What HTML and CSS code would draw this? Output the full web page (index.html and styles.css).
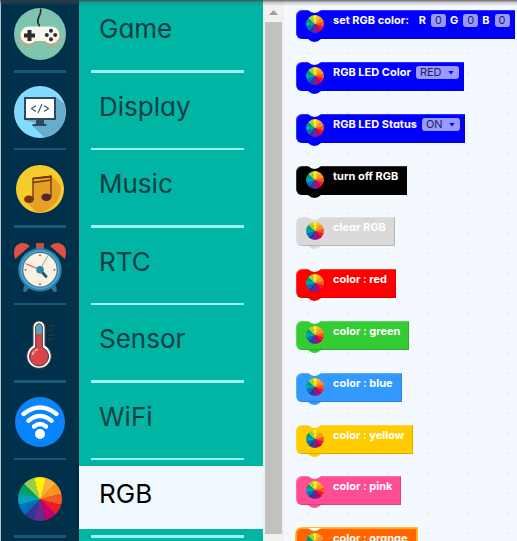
FILE: index.html
```html
<!DOCTYPE html>
<html lang="en">
<head>
<meta charset="utf-8">
<title>Blocks</title>
<link rel="stylesheet" href="styles.css">
</head>
<body>
<nav class="toolbox" aria-label="Categories">
  <ul class="categories">
    <li class="category">
      <span class="category-icon"><svg class="icon" viewBox="0 0 52 52" aria-hidden="true">
        <circle cx="26" cy="26" r="26" fill="#7dc5ae"/>
        <path d="M26.500 0.500C28 7 22 11 24 15Q25.500 17 25.500 20" fill="none" stroke="#25292c" stroke-width="1.600"/>
        <path d="M15.500 20.500H36.500A9 9 0 1 1 33 37Q30 35 29 34H23Q21 36 19 37A9 9 0 1 1 15.500 20.500Z" fill="#b9ab8b"/>
        <path d="M15.500 18.500H36.500A8.500 8.500 0 1 1 31 33H21A8.500 8.500 0 1 1 15.500 18.500Z" fill="#f7f5ee"/>
        <path d="M13.500 22h4v3.500H21v4h-3.500V33h-4v-3.500H10v-4h3.500Z" fill="#2b2b2b"/>
        <g fill="#2b2b2b"><circle cx="37" cy="22.800" r="2"/><circle cx="37" cy="31.200" r="2"/><circle cx="32.800" cy="27" r="2"/><circle cx="41.200" cy="27" r="2"/></g>
      </svg></span>
      <button class="category-name">Game</button>
    </li>
    <li class="category">
      <span class="category-icon"><svg class="icon" viewBox="0 0 52 52" aria-hidden="true">
        <circle cx="26" cy="26" r="26" fill="#84dbff"/>
        <path d="M42 11L50.500 18A26 26 0 0 1 30.500 51.600L18.600 40L22 37L11 34Z" fill="#67accb"/>
        <rect x="10" y="11" width="32" height="23" fill="#324a5e"/>
        <rect x="12" y="13" width="28" height="19" fill="#fff"/>
        <path d="M22 34h8v4h2.500v2h-14v-2H22Z" fill="#324a5e"/>
        <path d="M22 19.500L17.500 22.500L22 25.500M30 19.500L34.500 22.500L30 25.500M28 18L24 27" fill="none" stroke="#3d5265" stroke-width="1.100"/>
      </svg></span>
      <button class="category-name">Display</button>
    </li>
    <li class="category">
      <span class="category-icon"><svg class="icon" viewBox="0 0 52 52" aria-hidden="true">
        <circle cx="26" cy="26" r="24" fill="#f5cb2e"/>
        <path d="M37 12.700L46.500 22A24 24 0 0 1 23 49.500L12 39L19 33V18Z" fill="#e5a125"/>
        <path d="M19 36V15.500L37 13.200V34M19 19.500L37 17.200" fill="none" stroke="#703112" stroke-width="1.300"/>
        <path d="M18.500 14.700L37.500 12.500V14.500L18.500 16.500Z" fill="#703112"/>
        <ellipse cx="15" cy="36.300" rx="4.900" ry="3.800" fill="#78350f"/>
        <ellipse cx="32.300" cy="34.300" rx="4.900" ry="3.800" fill="#562337"/>
      </svg></span>
      <button class="category-name">Music</button>
    </li>
    <li class="category">
      <span class="category-icon"><svg class="icon" viewBox="0 0 52 52" aria-hidden="true">
        <path d="M10 44l-1 6q3 3 6-3ZM42 44l1 6q-3 3-6-3Z" fill="#2a7598"/>
        <path d="M1 18Q-2 7 4 3.500Q10 0 16 5ZM51 18Q54 7 48 3.500Q42 0 36 5Z" fill="#df5142"/>
        <rect x="22" y="2" width="8" height="6" rx="1" fill="#c84e43"/>
        <circle cx="26" cy="28.700" r="21.700" fill="#2e83ad"/>
        <circle cx="26" cy="28.700" r="19.500" fill="#5aa9cd"/>
        <circle cx="26" cy="28.700" r="18" fill="#2d7ea6"/>
        <circle cx="26" cy="28.700" r="16.700" fill="#f9f2e4"/>
        <g fill="#d84b40"><circle cx="26" cy="14.300" r="1"/><circle cx="26" cy="43.200" r="1"/><circle cx="11.600" cy="28.700" r="1"/><circle cx="40.400" cy="28.700" r="1"/></g>
        <path d="M26 28.700L33.700 15" stroke="#a8aeb3" stroke-width="1.200"/>
        <path d="M26 28.700L12 22.700" stroke="#d2574b" stroke-width="1.100"/>
        <path d="M26 28.700L32 35.500" stroke="#235e66" stroke-width="3" stroke-linecap="round"/>
        <circle cx="26" cy="28.700" r="3.800" fill="#2585ab"/>
      </svg></span>
      <button class="category-name">RTC</button>
    </li>
    <li class="category">
      <span class="category-icon"><svg class="icon" viewBox="0 0 52 52" aria-hidden="true">
        <path d="M19 9a6 6 0 0 1 12 0V27.500A12.200 12.200 0 1 1 19 27.500Z" fill="#fff" stroke="#513f40" stroke-width="1"/>
        <path d="M21.700 9a3.300 3.300 0 0 1 6.600 0V29.500A9.500 9.500 0 1 1 21.700 29.500Z" fill="#dd4448" stroke="#35414c" stroke-width="1"/>
        <path d="M22.200 16V9a2.800 2.800 0 0 1 5.600 0V16Z" fill="#55a6bd"/>
        <path d="M18.500 37Q19 32.500 24 31.500" fill="none" stroke="#f6b5b2" stroke-width="1.500" stroke-dasharray="4 1"/>
        <path d="M34.500 8H41M34.500 12.500H38.500M34.500 17H41M34.500 21.500H38.500" stroke="#293a45" stroke-width="1.400"/>
      </svg></span>
      <button class="category-name">Sensor</button>
    </li>
    <li class="category">
      <span class="category-icon"><svg class="icon" viewBox="0 0 52 52" aria-hidden="true">
        <circle cx="26" cy="26" r="25" fill="#0a84fb"/>
        <g fill="none" stroke="#fff" stroke-width="4.400" stroke-linecap="round"><path d="M9.500 18Q26 5 42.500 18"/><path d="M14.500 24.700Q26 15.500 37.500 24.700"/><path d="M20 30.500Q26 25.500 32 30.500"/></g>
        <circle cx="26" cy="38" r="5" fill="#fff"/>
      </svg></span>
      <button class="category-name">WiFi</button>
    </li>
    <li class="category">
      <span class="category-icon"><span class="wheel wheel-large"></span></span>
      <button class="category-name is-selected">RGB</button>
    </li>
  </ul>
</nav>
<div class="scrollbar" aria-hidden="true"><span class="scroll-arrow"></span><span class="scroll-thumb"></span></div>
<main class="workspace">
  <div class="block blue-deep"><span class="wheel"></span>
    <div class="fields rgb-fields"><span class="lead">set RGB color:</span>
      <label class="pair">R <input class="field number" value="0"></label>
      <label class="pair">G <input class="field number" value="0"></label>
      <label class="pair">B <input class="field number" value="0"></label></div></div>
  <div class="block blue-deep"><span class="wheel"></span>
    <label class="fields pair">RGB LED Color <span class="picker"><select class="field choice"><option>RED</option></select></span></label></div>
  <div class="block blue-deep"><span class="wheel"></span>
    <label class="fields pair">RGB LED Status <span class="picker"><select class="field choice"><option>ON</option></select></span></label></div>
  <div class="block black"><span class="wheel"></span><span class="fields">turn off RGB</span></div>
  <div class="block grey"><span class="wheel"></span><span class="fields">clear RGB</span></div>
  <div class="block red"><span class="wheel"></span><span class="fields">color : red</span></div>
  <div class="block green"><span class="wheel"></span><span class="fields">color : green</span></div>
  <div class="block blue"><span class="wheel"></span><span class="fields">color : blue</span></div>
  <div class="block yellow"><span class="wheel"></span><span class="fields">color : yellow</span></div>
  <div class="block pink"><span class="wheel"></span><span class="fields">color : pink</span></div>
  <div class="block orange is-active"><span class="wheel"></span><span class="fields">color : orange</span></div>
</main>
</body>
</html>
```
FILE: styles.css
```css
* { box-sizing: border-box; }

body {
  margin: 0;
  height: 100vh;
  display: flex;
  overflow: hidden;
  font-family: Inter, "Liberation Sans", sans-serif;
  font-feature-settings: "cv11";
}

body::after {
  content: "";
  position: absolute;
  inset: 0 0 auto;
  height: 6px;
  background: linear-gradient(rgba(60, 60, 60, 0.75), rgba(90, 90, 90, 0.3) 40%, transparent);
  pointer-events: none;
}

.toolbox {
  flex: none;
  width: 263px;
  overflow: hidden;
  background: linear-gradient(to right, #b4c4cc 1px, #00304a 1px 76px, #002b44 76px 79px, #00b5a3 79px);
}

.categories {
  list-style: none;
  margin: -5px 0 0;
  padding: 0;
}

.category {
  display: grid;
  grid-template-columns: 79px 1fr;
  height: 78px;
  padding: 6px 0;
  background:
    linear-gradient(#1b5878, #1b5878) 14px 100% / 52px 3px no-repeat,
    linear-gradient(#9bf1f4, #9bf1f4) 91px 100% / 153px 3px no-repeat;
}

.category:nth-child(even) {
  height: 77px;
  background-size: 52px 2px, 153px 2px;
}

.category-icon {
  display: flex;
  align-items: center;
  justify-content: center;
  padding-left: 1px;
}

.icon { width: 52px; height: 52px; }

.category-name {
  margin: 0 0 3px;
  padding: 0 20px 8px;
  border: 0;
  background: none;
  color: #073e46;
  font: 400 26px Inter, "Liberation Sans", sans-serif;
  font-feature-settings: "cv11";
  text-align: left;
}

.category-name.is-selected { background: #f0f8ff; color: #000; }

.wheel {
  flex: none;
  width: 18px;
  height: 18px;
  border-radius: 50%;
  background: conic-gradient(from -15deg,
    #fff200 30deg, #fbb03b 0 60deg, #f7931e 0 90deg, #f15a24 0 120deg,
    #ed1c24 0 150deg, #c1006e 0 180deg, #662d91 0 210deg, #343795 0 240deg,
    #0071bc 0 270deg, #00a3b8 0 300deg, #00a067 0 330deg, #9fcc4a 0);
}

.wheel-large { width: 44px; height: 44px; }

.scrollbar {
  flex: none;
  width: 21px;
  display: flex;
  flex-direction: column;
  padding: 10px 2px 7px;
  background: #f1f1f1;
}

.scroll-arrow {
  margin: 0 4px 7px;
  height: 5px;
  background: #a0a0a0;
  clip-path: polygon(50% 0, 100% 100%, 0 100%);
}

.scroll-thumb { flex: 1; background: #c1c1c1; }

.workspace {
  flex: 1;
  min-width: 0;
  display: flex;
  flex-direction: column;
  align-items: flex-start;
  gap: 23px;
  padding: 10px 0 0 12px;
  overflow: hidden;
  background: radial-gradient(circle at 4px 13px, #e4ecf3 1px, transparent 1px) 0 0 / 20px 20px #f4f9ff;
}

.block {
  position: relative;
  flex: none;
  display: flex;
  gap: 9px;
  height: 29px;
  padding: 0 9px 0 10px;
  border-radius: 6px 0 0 6px;
  background: var(--fill);
  box-shadow: inset 1px 1px rgba(255, 255, 255, 0.2), inset -1px -1px rgba(0, 0, 0, 0.15);
  color: #fff;
  font-size: 11px;
  font-weight: 700;
  white-space: nowrap;
}

/* The row spacing is a little tighter after every fifth block */
.block:nth-child(5n + 4) { margin-bottom: -1px; }

.block::before,
.block::after {
  content: "";
  position: absolute;
  left: 12px;
  width: 13px;
  height: 3px;
  clip-path: polygon(0 0, 100% 0, 75% 75%, 50% 100%, 25% 75%);
}

.block::before { top: 0; background: #f4f9ff; }
.block::after { top: 100%; background: var(--fill); }

.block .wheel { margin-top: 5px; }

.fields { height: 20px; line-height: 20px; }
.rgb-fields { display: flex; gap: 4px; margin-right: -4px; }
.lead { margin-right: 6px; }
.pair { display: flex; align-items: center; gap: 5px; }
.fields.pair { margin-right: -4px; }

.field {
  height: 13px;
  margin: 0;
  padding: 0;
  border: 0;
  border-radius: 3px;
  background: #9999ff;
  color: #23235a;
  font: 400 11px/13px Inter, "Liberation Sans", sans-serif;
}

.number { width: 15px; text-align: center; }

.picker { position: relative; display: flex; }
.choice { appearance: none; padding: 0 17px 0 4px; }

.picker::after {
  content: "";
  position: absolute;
  right: 5px;
  top: 5px;
  width: 6px;
  height: 4px;
  background: #0000ff;
  clip-path: polygon(0 0, 100% 0, 50% 100%);
  pointer-events: none;
}

.blue-deep { --fill: #0000ff; }
.black { --fill: #000; }
.grey { --fill: #d9d9d9; }
.red { --fill: #ff0000; }
.green { --fill: #33cc33; }
.blue { --fill: #3399ff; }
.yellow { --fill: #ffcc00; }
.pink { --fill: #ff4d94; }
.orange { --fill: #ff6600; }
.is-active { box-shadow: 0 0 0 1px #ffc020, inset 0 0 0 1px #ffa820; }
```
